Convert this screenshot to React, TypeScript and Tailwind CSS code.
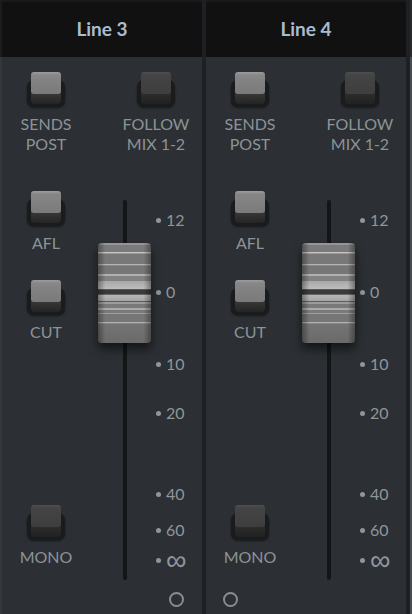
import React from "react";

function Btn({ on }: { on: boolean }) {
  return (
    <div className="relative w-[38px] h-[34px]">
      <div className="absolute left-0 right-0 top-[8px] bottom-[-1px] rounded-[7px] bg-[#1a1b1d] shadow-[0_1px_2px_rgba(0,0,0,0.5)]" />
      <div
        className={
          on
            ? "absolute left-[4px] w-[30px] top-[20px] h-[12px] rounded-b-[4px] bg-[linear-gradient(to_bottom,#3a3a3a,#242424)]"
            : "absolute left-[4px] w-[30px] top-[20px] h-[12px] rounded-b-[4px] bg-[linear-gradient(to_bottom,#2e2e2e,#212121)]"
        }
      />
      <div
        className={
          on
            ? "absolute left-[4px] w-[30px] top-0 h-[22px] rounded-[3px] bg-[linear-gradient(to_bottom,#9c9c9c,#868686_15%,#7a7a7a)]"
            : "absolute left-[4px] w-[30px] top-0 h-[22px] rounded-[3px] bg-[linear-gradient(to_bottom,#4e4e4e,#444444_15%,#3e3e3e)]"
        }
      />
    </div>
  );
}

function Label({ lines }: { lines: string[] }) {
  return (
    <div className="mt-[8px] flex flex-col items-center text-[16px] leading-[20px] text-[#8c9398] font-['Lato',sans-serif]">
      {lines.map((l) => (
        <span key={l}>{l}</span>
      ))}
    </div>
  );
}

function Cap() {
  return (
    <div className="absolute left-[8px] top-[89px] w-[53px] h-[100px] rounded-[4px] overflow-hidden shadow-[0_6px_10px_rgba(0,0,0,0.55)] flex flex-col">
      <div className="h-[2px] bg-[#959595]" />
      <div className="h-[7px] bg-[#7a7a7a]" />
      <div className="h-[1px] bg-[#c4c4c4]" />
      <div className="h-[1px] bg-[#9a9a9a]" />
      <div className="h-[10px] bg-[#787878]" />
      <div className="h-[1px] bg-[#b4b4b4]" />
      <div className="h-[1px] bg-[#888888]" />
      <div className="h-[8px] bg-[#767676]" />
      <div className="h-[2px] bg-[#b0b0b0]" />
      <div className="h-[5px] bg-[#828282]" />
      <div className="h-[8px] bg-[linear-gradient(to_bottom,#a8a8a8,#bdbdbd)]" />
      <div className="h-[1px] bg-[#5a5a5a]" />
      <div className="h-[4px] bg-[#3a3a3a]" />
      <div className="h-[1px] bg-[#666666]" />
      <div className="h-[6px] bg-[linear-gradient(to_bottom,#b6b6b6,#a4a4a4)]" />
      <div className="h-[1px] bg-[#5e5e5e]" />
      <div className="h-[2px] bg-[#9c9c9c]" />
      <div className="h-[4px] bg-[#7a7a7a]" />
      <div className="h-[2px] bg-[#aaaaaa]" />
      <div className="h-[3px] bg-[#7a7a7a]" />
      <div className="h-[1px] bg-[#a0a0a0]" />
      <div className="h-[8px] bg-[#767676]" />
      <div className="h-[1px] bg-[#b2b2b2]" />
      <div className="h-[1px] bg-[#868686]" />
      <div className="flex-1 bg-[linear-gradient(to_bottom,#747474,#6a6a6a)]" />
      <div className="absolute inset-0 bg-[linear-gradient(to_right,rgba(0,0,0,0.35),rgba(0,0,0,0)_14%,rgba(0,0,0,0)_86%,rgba(0,0,0,0.35))]" />
    </div>
  );
}

function Tick({ top, label, inf }: { top: string; label: string; inf?: boolean }) {
  return (
    <div className={"absolute left-[66px] h-[20px] flex items-center gap-[5px] " + top}>
      <div className="w-[5px] h-[5px] rounded-full bg-[#8e969c]" />
      <span
        className={
          inf
            ? "text-[29px] leading-[20px] text-[#8e969c] font-['DejaVu_Sans',sans-serif] font-extralight"
            : "text-[16px] leading-[20px] text-[#8e969c] font-['Lato',sans-serif]"
        }
      >
        {label}
      </span>
    </div>
  );
}

function Strip({ name, circleRight }: { name: string; circleRight: boolean }) {
  return (
    <div className="w-[200px] flex flex-col">
      <div className="h-[57px] bg-[#111111] border-t-[2px] border-[#1a1a1a] flex items-center justify-center">
        <span className="text-[19px] font-bold text-[#a9bcd0] font-['Lato',sans-serif]">{name}</span>
      </div>
      <div className="flex-1 bg-[#2c2f33] flex flex-col">
        <div className="flex pt-[15px]">
          <div className="w-[88px] flex flex-col items-center">
            <Btn on />
            <Label lines={["SENDS", "POST"]} />
          </div>
          <div className="ml-[20px] w-[92px] flex flex-col items-center">
            <Btn on={false} />
            <Label lines={["FOLLOW", "MIX 1-2"]} />
          </div>
        </div>
        <div className="flex">
          <div className="w-[88px] flex flex-col items-center">
            <div className="mt-[37px]">
              <Btn on />
            </div>
            <Label lines={["AFL"]} />
            <div className="mt-[27px]">
              <Btn on />
            </div>
            <Label lines={["CUT"]} />
            <div className="mt-[163px]">
              <Btn on={false} />
            </div>
            <Label lines={["MONO"]} />
          </div>
          <div className="relative w-[112px] h-[426px]">
            <div className="ml-[33px] mt-[46px] w-[4px] h-[380px] rounded-full bg-[#141516]" />
            <Tick top="top-[56px]" label="12" />
            <Tick top="top-[128px]" label="0" />
            <Tick top="top-[200px]" label="10" />
            <Tick top="top-[249px]" label="20" />
            <Tick top="top-[330px]" label="40" />
            <Tick top="top-[366px]" label="60" />
            <Tick top="top-[396px]" label="∞" inf />
            <Cap />
          </div>
        </div>
        <div className={circleRight ? "flex justify-end pr-[18px] mt-[12px]" : "flex justify-start pl-[17px] mt-[12px]"}>
          <div className="w-[15px] h-[15px] rounded-full border-[2px] border-[#878d92]" />
        </div>
      </div>
    </div>
  );
}

export default function App() {
  return (
    <div className="w-[412px] h-[614px] overflow-hidden flex bg-[#2c2f33]">
      <div className="w-[2px] flex flex-col">
        <div className="h-[57px] bg-[#1c1c1c]" />
        <div className="flex-1 bg-[#34373b]" />
      </div>
      <Strip name="Line 3" circleRight />
      <div className="w-[4px] bg-[#1f2023]" />
      <Strip name="Line 4" circleRight={false} />
      <div className="w-[4px] bg-[#1f2023]" />
      <div className="w-[2px] flex flex-col">
        <div className="h-[57px] bg-[#2a2b2d]" />
        <div className="flex-1 bg-[#4a4f55]" />
      </div>
    </div>
  );
}
